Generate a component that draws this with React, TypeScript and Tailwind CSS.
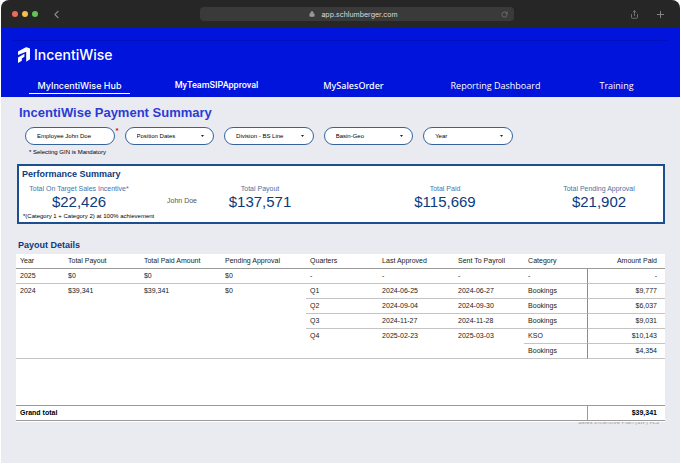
import React from 'react';
import { ChevronLeft, Lock, Plus, RotateCw, Share } from 'lucide-react';

const navItems = [
  { label: 'MyIncentiWise Hub', className: "font-['Inter',sans-serif] border-white" },
  { label: 'MyTeamSIPApproval', className: "font-['Roboto',sans-serif] border-transparent" },
  { label: 'MySalesOrder', className: "font-['Noto_Sans',sans-serif] border-transparent" },
  { label: 'Reporting Dashboard', className: "font-['Open_Sans',sans-serif] border-transparent" },
  { label: 'Training', className: "font-['Open_Sans',sans-serif] border-transparent" },
];

const filters = ['Position Dates', 'Division - BS Line', 'Basin-Geo', 'Year'];

const quarters = [
  { quarter: 'Q1', approved: '2024-06-25', payroll: '2024-06-27', category: 'Bookings', amount: '$9,777' },
  { quarter: 'Q2', approved: '2024-09-04', payroll: '2024-09-30', category: 'Bookings', amount: '$6,037' },
  { quarter: 'Q3', approved: '2024-11-27', payroll: '2024-11-28', category: 'Bookings', amount: '$9,031' },
  { quarter: 'Q4', approved: '2025-02-23', payroll: '2025-03-03', category: 'KSO', amount: '$10,143', span: 2 },
  { category: 'Bookings', amount: '$4,354' },
];

const BrowserBar: React.FC = () => (
  <div className="grid h-7 grid-cols-[199fr_314fr_166fr] items-center rounded-t-lg bg-[#262626] text-[#8a8a8a]">
    <div className="flex items-center pl-[11px]">
      <div className="flex gap-1">
        <span className="size-1.5 rounded-full bg-[#ee6a5f]" />
        <span className="size-1.5 rounded-full bg-[#f5bd4f]" />
        <span className="size-1.5 rounded-full bg-[#61c454]" />
      </div>
      <button type="button" aria-label="Back" className="ml-3">
        <ChevronLeft size={13} strokeWidth={2} />
      </button>
    </div>
    <div className="flex h-3.5 items-center rounded bg-[#3a3a3a] px-1.5">
      <div className="flex flex-1 items-center justify-center gap-1.5 font-['Inter',sans-serif] text-[7px] leading-none text-[#dcdcdc]">
        <Lock size={6} strokeWidth={2} fill="currentColor" className="text-[#9a9a9a]" />
        <span>app.schlumberger.com</span>
      </div>
      <button type="button" aria-label="Reload">
        <RotateCw size={7} />
      </button>
    </div>
    <div className="flex items-center justify-end gap-4 pr-3.5">
      <button type="button" aria-label="Share">
        <Share size={9} strokeWidth={2} />
      </button>
      <button type="button" aria-label="New tab">
        <Plus size={11} strokeWidth={2} />
      </button>
    </div>
  </div>
);

const Header: React.FC = () => (
  <header className="bg-[#0014dc] text-white">
    <div className="mx-3 h-[13px] border-b border-[#0010bc]" />
    <div className="flex h-7 items-center gap-1 pl-[17px]">
      <svg viewBox="0 0 12 16" className="h-4 w-3" fill="currentColor" aria-hidden="true">
        <path d="M0 4.6 7.4.5Q8.4 0 9.4.4L12 1.6v10.6l-3.8 2.6V4.8L0 8Z" />
        <path d="M0 10.4 6.4 6.8v3L3.8 11.4v2.4L0 16Z" />
      </svg>
      <span className="font-['Inter',sans-serif] text-[14px] leading-4 font-medium">IncentiWise</span>
    </div>
    <nav className="grid h-7 grid-cols-[137fr_137fr_137fr_147fr_95fr] items-end justify-items-center pr-4 pb-[3px] pl-[10px] text-[9px] leading-[15px] font-medium">
      {navItems.map((item) => (
        <a key={item.label} href="#" className={`border-b px-2 whitespace-nowrap ${item.className}`}>
          {item.label}
        </a>
      ))}
    </nav>
  </header>
);

const Filters: React.FC = () => (
  <form className="grid w-[77%] grid-cols-5 gap-2.5 pr-[3px] pl-[9px] text-[6px] text-black">
    <div className="relative">
      <input
        aria-label="Employee"
        defaultValue="Employee John Doe"
        className="h-[18px] w-full rounded-full border border-[#36639b] bg-white pl-[11px]"
      />
      <span className="absolute -right-1 top-0 text-[8px] leading-none font-bold text-red-600">*</span>
    </div>
    {filters.map((name) => (
      <div key={name} className="relative">
        <select
          aria-label={name}
          className="h-[18px] w-full appearance-none rounded-full border border-[#36639b] bg-white pl-[11px] font-medium"
        >
          <option>{name}</option>
        </select>
        <svg viewBox="0 0 3 2" className="pointer-events-none absolute top-2 right-2.5 h-0.5 w-[3px]" aria-hidden="true">
          <path d="M0 0h3L1.5 2Z" fill="#222" />
        </svg>
      </div>
    ))}
  </form>
);

const Metric: React.FC<{ label: string; value: string }> = ({ label, value }) => (
  <div className="text-center whitespace-nowrap">
    <div className="text-[7px] leading-2 text-[#4a72a8]">{label}</div>
    <div className="text-[15px] leading-[18px] text-[#0b3a7c]">{value}</div>
  </div>
);

const PerformanceSummary: React.FC = () => (
  <section className="mt-2 ml-px border-2 border-[#1c4f8e] bg-white pb-0.5">
    <h2 className="pt-0.5 pl-[3px] text-[9px] leading-3 font-bold text-[#0b3a7c]">Performance Summary</h2>
    <div className="grid h-8 grid-cols-[120fr_86fr_70fr_60fr_180fr_128fr] items-end pb-px">
      <Metric label="Total On Target Sales Incentive*" value="$22,426" />
      <div className="pb-1.5 text-center text-[7px] leading-2 text-[#555]">John Doe</div>
      <Metric label="Total Payout" value="$137,571" />
      <div />
      <Metric label="Total Paid" value="$115,669" />
      <Metric label="Total Pending Approval" value="$21,902" />
    </div>
    <p className="pl-1 text-[6px] leading-2 text-black">*(Category 1 + Category 2) at 100% achievement</p>
  </section>
);

const cell = 'h-[15px] border-b border-[#c4c4c4] px-1 py-0 align-top leading-[14px]';
const amountCell = 'h-[15px] border-b border-l border-[#c4c4c4] border-l-[#8c8c8c] pr-2 py-0 text-right align-top leading-[14px]';
const headCell = 'h-[15px] border-b border-[#9a9a9a] px-1 py-0 font-normal';

const PayoutTable: React.FC = () => (
  <table className="relative z-10 w-full table-fixed border-separate border-spacing-0 border-b border-white bg-white text-left text-[7px] leading-[14px] whitespace-nowrap text-[#222]">
    <colgroup>
      <col className="w-[7.4%]" />
      <col className="w-[11.7%]" />
      <col className="w-[12.5%]" />
      <col className="w-[13.1%]" />
      <col className="w-[11.1%]" />
      <col className="w-[11.7%]" />
      <col className="w-[10.8%]" />
      <col className="w-[9.7%]" />
      <col className="w-[12%]" />
    </colgroup>
    <thead>
      <tr>
        <th className={headCell}>Year</th>
        <th className={headCell}>Total Payout</th>
        <th className={headCell}>Total Paid Amount</th>
        <th className={headCell}>Pending Approval</th>
        <th className={headCell}>Quarters</th>
        <th className={headCell}>Last Approved</th>
        <th className={headCell}>Sent To Payroll</th>
        <th className={headCell}>Category</th>
        <th className="h-[15px] border-b border-[#9a9a9a] py-0 pr-2 text-right font-normal">Amount Paid</th>
      </tr>
    </thead>
    <tbody>
      <tr>
        <td className={cell}>2025</td>
        <td className={cell}>$0</td>
        <td className={cell}>$0</td>
        <td className={cell}>$0</td>
        <td className={cell}>-</td>
        <td className={cell}>-</td>
        <td className={cell}>-</td>
        <td className={cell}>-</td>
        <td className={amountCell}>-</td>
      </tr>
      {quarters.map((row, i) => (
        <tr key={i}>
          {i === 0 && (
            <>
              <td rowSpan={5} className={cell}>2024</td>
              <td rowSpan={5} className={cell}>$39,341</td>
              <td rowSpan={5} className={cell}>$39,341</td>
              <td rowSpan={5} className={cell}>$0</td>
            </>
          )}
          {row.quarter && (
            <>
              <td rowSpan={row.span} className={cell}>{row.quarter}</td>
              <td rowSpan={row.span} className={cell}>{row.approved}</td>
              <td rowSpan={row.span} className={cell}>{row.payroll}</td>
            </>
          )}
          <td className={cell}>{row.category}</td>
          <td className={amountCell}>{row.amount}</td>
        </tr>
      ))}
      <tr>
        <td colSpan={9} className="h-[47px] border-b border-[#9a9a9a] p-0" />
      </tr>
    </tbody>
    <tfoot>
      <tr className="font-bold text-black">
        <td colSpan={8} className="h-[15px] border-b border-[#9a9a9a] px-1 py-0">Grand total</td>
        <td className="h-[15px] border-b border-l border-[#9a9a9a] py-0 pr-2 text-right">$39,341</td>
      </tr>
    </tfoot>
  </table>
);

export default function App() {
  return (
    <div className="flex min-h-screen flex-col bg-white px-px pb-px font-['Liberation_Sans',Arial,sans-serif]">
      <BrowserBar />
      <Header />
      <main className="flex-1 bg-[#eaebf0] px-[15px]">
        <h1 className="pt-2 pl-[3px] text-[13px] leading-4 font-bold text-[#2b3bd6]">IncentiWise Payment Summary</h1>
        <div className="pt-1.5">
          <Filters />
        </div>
        <p className="pt-[3px] pl-[13px] text-[6px] leading-2 text-black">* Selecting GIN is Mandatory</p>
        <PerformanceSummary />
        <h2 className="pt-[15px] pb-[3px] pl-0.5 text-[9px] leading-3 font-bold text-[#0b3a7c]">Payout Details</h2>
        <PayoutTable />
        <p className="-mt-1 pr-1.5 text-right font-['Noto_Sans',sans-serif] text-[6px] leading-2 text-[#a0a0a6]">
          Sales Incentive Plan (SIP) FLS
        </p>
      </main>
    </div>
  );
}
